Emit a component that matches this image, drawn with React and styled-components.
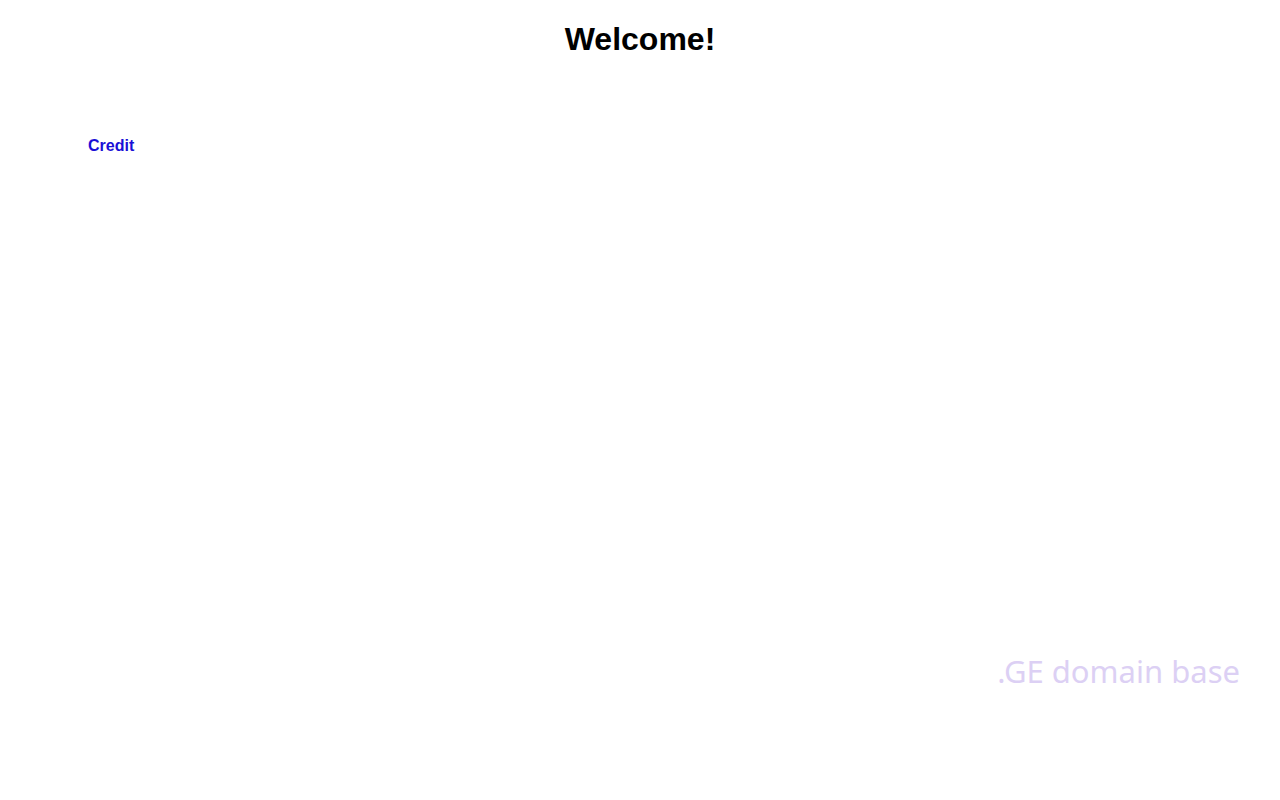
import React from 'react';
import styled, { createGlobalStyle } from 'styled-components';

const GlobalStyle = createGlobalStyle`
  html, body {
    margin: 0;
    padding: 0;
    background: #ffffff;
  }
  body {
    font-family: "Liberation Sans", Arial, sans-serif;
  }
`;

const Page = styled.div`
  min-height: 800px;
  display: flex;
  flex-direction: column;
`;

const Title = styled.h1`
  margin: 21px 0 0;
  font-size: 32px;
  line-height: 37px;
  font-weight: bold;
  text-align: center;
  color: #000000;
`;

const Links = styled.nav`
  display: flex;
  padding: 0 0 0 88px;
  margin-top: 79px;
`;

const LinkItem = styled.a`
  font-size: 16px;
  font-weight: bold;
  line-height: 18px;
  color: #1a0fd6;
  text-decoration: none;
  cursor: pointer;
`;

const Watermark = styled.div`
  margin-top: 494px;
  padding-right: 40px;
  text-align: right;
  font-family: "Noto Sans", "Open Sans", sans-serif;
  font-size: 31px;
  line-height: 44px;
  color: #dcd0f4;
`;

export default function App() {
  return (
    <>
      <GlobalStyle />
      <Page>
        <Title>Welcome!</Title>
        <Links>
          <LinkItem href="#">Credit</LinkItem>
        </Links>
        <Watermark>.GE domain base</Watermark>
      </Page>
    </>
  );
}
